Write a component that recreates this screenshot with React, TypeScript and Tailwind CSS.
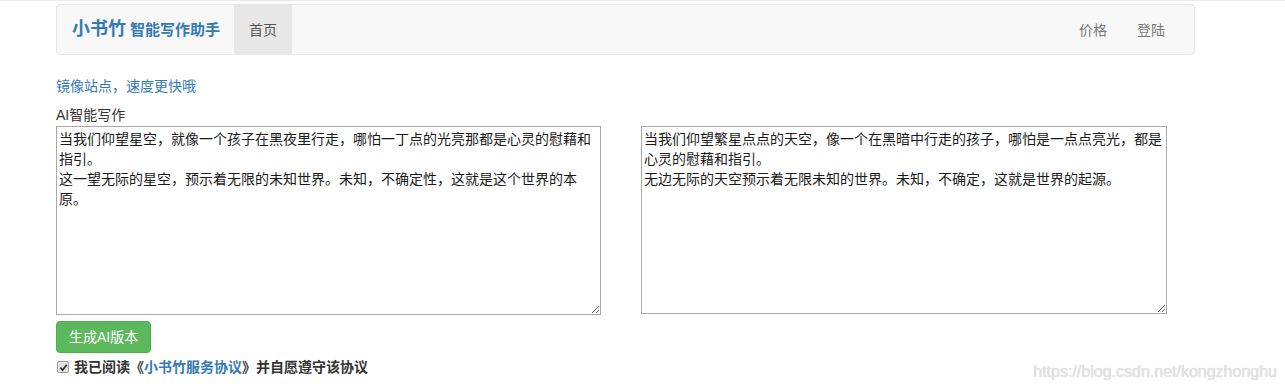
import React from 'react';

const leftText =
  '当我们仰望星空，就像一个孩子在黑夜里行走，哪怕一丁点的光亮那都是心灵的慰藉和指引。\n这一望无际的星空，预示着无限的未知世界。未知，不确定性，这就是这个世界的本原。';

const rightText =
  '当我们仰望繁星点点的天空，像一个在黑暗中行走的孩子，哪怕是一点点亮光，都是心灵的慰藉和指引。\n无边无际的天空预示着无限未知的世界。未知，不确定，这就是世界的起源。';

const font = "font-['Liberation_Sans','Noto_Sans_CJK_SC',sans-serif]";

export default function App() {
  return (
    <div className={`relative w-[1285px] h-[391px] bg-white text-[#333] text-[14px] leading-[20px] ${font}`}>
      {/* 顶部残留线 */}
      <div className="h-[1px] bg-[#ebebeb]" />

      <div className="ml-[56px] w-[1139px] pt-[3px]">
        {/* 导航栏 */}
        <nav className="flex items-stretch h-[51px] bg-[#f8f8f8] border border-[#e7e7e7] rounded-[4px]">
          <a className="flex items-baseline gap-[4px] pl-[15px] pr-[14px] pt-[14px] text-[#337ab7] font-bold">
            <span className="text-[18px] leading-[20px]">小书竹</span>
            <span className="text-[15px] leading-[20px]">智能写作助手</span>
          </a>
          <a className="flex items-center px-[15px] bg-[#e7e7e7] text-[#555]">首页</a>
          <div className="ml-auto flex items-stretch mr-[14px]">
            <a className="flex items-center px-[15px] text-[#777]">价格</a>
            <a className="flex items-center px-[15px] text-[#777]">登陆</a>
          </div>
        </nav>

        {/* 镜像链接 */}
        <a className="block mt-[21px] text-[#337ab7]">镜像站点，速度更快哦</a>

        {/* 写作区 */}
        <div className="mt-[9px]">AI智能写作</div>
        <div className="flex items-start gap-[40px] mt-[1px]">
          <textarea
            className={`w-[545px] h-[189px] border border-[#a9a9a9] px-[2px] pt-[2px] text-[14px] leading-[20px] text-[#1a1a1a] resize outline-none ${font}`}
            defaultValue={leftText}
          />
          <textarea
            className={`w-[526px] h-[188px] border border-[#a9a9a9] px-[2px] pt-[2px] text-[14px] leading-[20px] text-[#1a1a1a] resize outline-none ${font}`}
            defaultValue={rightText}
          />
        </div>

        <button className="mt-[6px] h-[32px] px-[12px] bg-[#5cb85c] border border-[#4cae4c] rounded-[4px] text-white">
          生成AI版本
        </button>

        {/* 协议 */}
        <label className="flex items-center gap-[5px] mt-[4px] pl-[1px] font-bold">
          <span className="flex items-center justify-center w-[12px] h-[12px] bg-[#e3e3e3] border border-[#9a9a9a] rounded-[2px]">
            <svg width="9" height="9" viewBox="0 0 10 10">
              <path d="M1.5 5.2 L4 7.8 L8.6 2" fill="none" stroke="#333" strokeWidth="2" />
            </svg>
          </span>
          <span>
            我已阅读《<a className="text-[#337ab7]">小书竹服务协议</a>》并自愿遵守该协议
          </span>
        </label>
      </div>

      {/* 水印 */}
      <div className="absolute right-[8px] bottom-[10px] text-[16px] leading-[18px] text-[#e2e2e2] font-['Liberation_Sans',sans-serif] [text-shadow:0_0_1px_#cfcfcf]">
        https://blog.csdn.net/kongzhonghu
      </div>
    </div>
  );
}
